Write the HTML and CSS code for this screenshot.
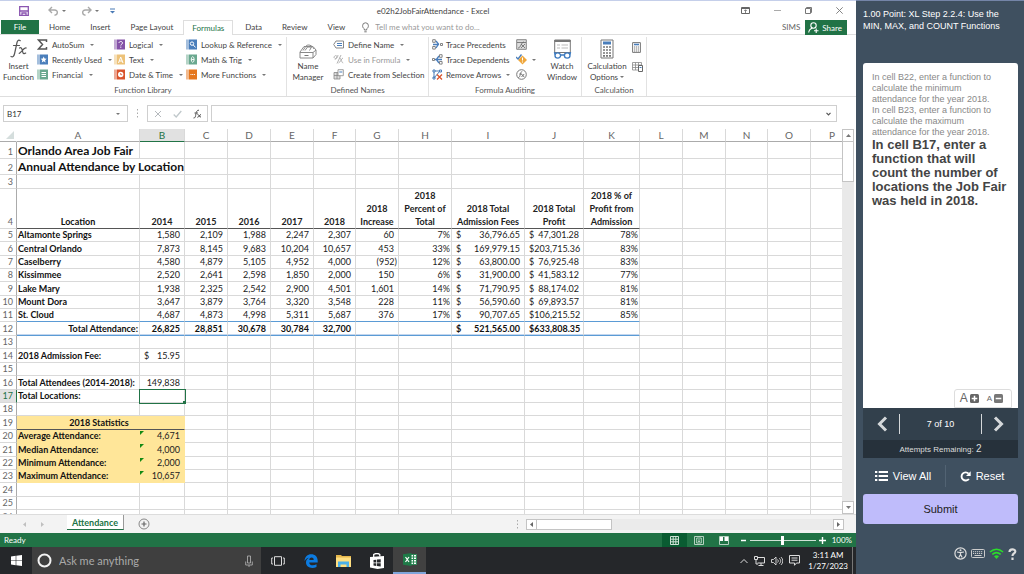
FILE: index.html
```html
<!DOCTYPE html>
<html lang="en">
<head>
<meta charset="utf-8">
<title>e02h2JobFairAttendance - Excel</title>
<link rel="stylesheet" href="styles.css">
</head>
<body>
<div class="screen">
<main class="desktop">
  <header class="titlebar">
    <div class="quick">
      <button aria-label="Save"><svg width="10" height="10" viewBox="0 0 10 10"><path d="M.7.7h8.600v8.600H.7z" fill="#fff" stroke="#8a55b0" stroke-width="1.300"/><path d="M.7 5h8.600M3 9V7h4v2" fill="none" stroke="#8a55b0" stroke-width="1.300"/></svg></button>
      <button class="has-caret" aria-label="Undo"><svg width="11" height="10" viewBox="0 0 11 10"><path d="M4 1L1 4l3 3M1 4h5.500c4 0 3.500 5 0 5.300" fill="none" stroke="#a9a9a9" stroke-width="1.400"/></svg><i class="caret"></i></button>
      <button class="has-caret" aria-label="Redo"><svg width="11" height="10" viewBox="0 0 11 10"><path d="M7 1l3 3-3 3M10 4H4.500C.5 4 1 9 4.500 9.300" fill="none" stroke="#a9a9a9" stroke-width="1.400"/></svg><i class="caret"></i></button>
      <button aria-label="Customize toolbar"><svg width="5" height="6" viewBox="0 0 5 6"><path d="M0 1h5" stroke="#4a7ab5"/><path d="M0 3h5L2.500 5.500z" fill="#4a7ab5"/></svg></button>
    </div>
    <h1>e02h2JobFairAttendance - Excel</h1>
    <div class="window-buttons">
      <button aria-label="Ribbon display"><svg width="9" height="7" viewBox="0 0 9 7"><path d="M.5.5h8v6h-8zM.5 1.500h8" fill="none" stroke="#666"/><path d="M4.500 6V3M3.200 4l1.300-1.300L5.800 4" fill="none" stroke="#666" stroke-width=".8"/></svg></button>
      <button aria-label="Minimize"><svg width="7" height="7" viewBox="0 0 7 7"><path d="M0 3.500h7" stroke="#aaa"/></svg></button>
      <button aria-label="Restore"><svg width="7" height="7" viewBox="0 0 7 7"><path d="M.5 1.500h5v5h-5zM1.500 1V.5h5v5H6" fill="none" stroke="#777"/></svg></button>
      <button aria-label="Close"><svg width="7" height="7" viewBox="0 0 7 7"><path d="M.3.3l6.400 6.400M6.700.3L.3 6.700" stroke="#777" stroke-width=".9"/></svg></button>
    </div>
  </header>

  <nav class="tabs">
    <button class="file">File</button>
    <button>Home</button><button>Insert</button><button>Page Layout</button><button class="active">Formulas</button><button>Data</button><button>Review</button><button>View</button>
    <label class="tell"><svg width="7" height="11" viewBox="0 0 7 11"><path d="M2.300 8V6.800C1 6 .6 5 .6 3.700a2.900 2.900 0 015.800 0C6.400 5 6 6 4.700 6.800V8zM2.300 9.800h2.400" fill="none" stroke="#777"/></svg><input type="text" placeholder="Tell me what you want to do..." aria-label="Tell me what you want to do"></label>
    <span class="account">SIMS</span>
    <button class="share"><svg width="11" height="11" viewBox="0 0 11 11"><circle cx="5.500" cy="3.500" r="2.700" fill="none" stroke="#fff" stroke-width="1.100"/><path d="M.7 10.500C1 8 2.500 6.500 4.500 6.200M6 8.800h4.500M8.200 6.500v4.500" fill="none" stroke="#fff" stroke-width="1.100"/></svg>Share</button>
  </nav>

  <section class="ribbon" aria-label="Formulas ribbon">
    <div class="group library">
      <div class="group-body">
        <button class="big"><svg width="18" height="20" viewBox="0 0 18 20"><g fill="none" stroke="#555" stroke-linecap="round"><path d="M1 17.500c2 1 3-.5 3.600-3L7 3.500C7.500 1 9 .8 10.300 1.700M3.500 6.500h6" stroke-width="1.200"/><path d="M9.500 9c1.500-.8 2.200 0 2.600 1.700l.7 2.600c.4 1.400 1.400 1.800 2.900.8M16.200 9c-2-.8-5.500 5-7 5.300" stroke-width="1.200"/></g></svg><span>Insert<br>Function</span></button>
        <div class="list">
          <button><svg width="11" height="11" viewBox="0 0 11 11"><path d="M9.500 3V1H1.500L5.500 5.500l-4 4.500h8V8" fill="none" stroke="#555" stroke-width="1.500"/></svg>AutoSum<i class="caret"></i></button>
          <button><svg width="11" height="11" viewBox="0 0 11 11"><path d="M.5.500h1v10h-1zM2.500.5H11v10H2.500z" fill="#4a7ebb"/><path d="M6.700 2.500l.9 2 2.100.2-1.600 1.500.5 2.200-1.900-1.200-1.900 1.200.5-2.200-1.600-1.500 2.100-.2z" fill="#fff"/></svg>Recently Used<i class="caret"></i></button>
          <button><svg width="11" height="11" viewBox="0 0 11 11"><path d="M.5.5h1v10h-1zM2.500.5H11v10H2.500z" fill="#6aa88f"/><path d="M4.500 3.500h4.500M4.500 5.500h4.500M4.500 7.500h4.500" stroke="#fff"/></svg>Financial<i class="caret"></i></button>
        </div>
        <div class="list">
          <button><svg width="11" height="11" viewBox="0 0 11 11"><path d="M.5.5h1v10h-1zM2.500.5H11v10H2.500z" fill="#8552a8"/><path d="M5 4c0-2 3.500-2 3.500 0 0 1.200-1.700 1.200-1.700 2.500M6.800 7.600v1.200" fill="none" stroke="#fff"/></svg>Logical<i class="caret"></i></button>
          <button><svg width="11" height="11" viewBox="0 0 11 11"><path d="M.5.5h1v10h-1zM2.500.5H11v10H2.500z" fill="#edc278"/><path d="M4.500 9l2.200-6L9 9M5.300 7h3" fill="none" stroke="#fff"/></svg>Text<i class="caret"></i></button>
          <button><svg width="11" height="11" viewBox="0 0 11 11"><path d="M.5.5h1v10h-1zM2.500.5H11v10H2.500z" fill="#d9532c"/><circle cx="6.700" cy="5.500" r="2.700" fill="#fff"/><path d="M6.700 4v1.700h1.500" fill="none" stroke="#d9532c" stroke-width=".8"/></svg>Date &amp; Time<i class="caret"></i></button>
        </div>
        <div class="list">
          <button><svg width="11" height="11" viewBox="0 0 11 11"><path d="M.5.5h1v10h-1zM2.500.5H11v10H2.500z" fill="#4a7ebb"/><circle cx="6" cy="4.600" r="1.700" fill="none" stroke="#fff"/><path d="M7.300 6l2.300 2.500" stroke="#fff"/></svg>Lookup &amp; Reference<i class="caret"></i></button>
          <button><svg width="11" height="11" viewBox="0 0 11 11"><path d="M.5.5h1v10h-1zM2.500.5H11v10H2.500z" fill="#6aa88f"/><path d="M6.700 2.700c-1.900 0-1.900 5.600 0 5.600s1.900-5.600 0-5.600zM5.300 5.500h2.800" fill="none" stroke="#fff" stroke-width=".9"/></svg>Math &amp; Trig<i class="caret"></i></button>
          <button><svg width="11" height="11" viewBox="0 0 11 11"><path d="M.5.5h1v10h-1zM2.500.5H11v10H2.500z" fill="#e5771e"/><path d="M4.500 5.500h4.500" stroke="#fff" stroke-dasharray="1 .7"/></svg>More Functions<i class="caret"></i></button>
        </div>
      </div>
      <h2>Function Library</h2>
    </div>
    <div class="group names">
      <div class="group-body">
        <button class="big"><svg width="18" height="15" viewBox="0 0 18 15"><path d="M1 8l4-5.500h9l3 3.500v4.500L14 14H1zM1 8.500h13V14M14 8.500L17 6" fill="#fff" stroke="#8a8a8a"/><path d="M4 6.500L7 2c2-2 6-1 8 3M6 6.500l2.500-3.500 4 0-2 3.500" fill="none" stroke="#8a8a8a"/><path d="M5.500 11.500h4" stroke="#777"/></svg><span>Name<br>Manager</span></button>
        <div class="list">
          <button><svg width="11" height="9" viewBox="0 0 11 9"><path d="M3 1h7.500v7H3L.7 4.500z" fill="#fff" stroke="#888"/><path d="M4 3.500h5M4 5.500h5" stroke="#4a7ebb"/></svg>Define Name<i class="caret"></i></button>
          <button disabled><svg width="11" height="11" viewBox="0 0 11 11"><path d="M1 4c0-3 3-3 3-1S1 5 2 5s3-2 3-4M8 1L4 9.500M6.500 4c1.500-.5 2 5 3.700 5M10 4c-1.500 0-3 5-4.500 5" fill="none" stroke="#aaa" stroke-width=".9"/></svg>Use in Formula<i class="caret"></i></button>
          <button><svg width="11" height="11" viewBox="0 0 11 11"><path d="M1 3.500h6v6.500H1zM1 6.500h6M4 3.500V10" fill="#ddd" stroke="#888" stroke-width=".8"/><path d="M5 .7h5.300v6H5z" fill="#fff" stroke="#888" stroke-width=".8"/><path d="M6.300 3h3" stroke="#4a7ebb"/></svg>Create from Selection</button>
        </div>
      </div>
      <h2>Defined Names</h2>
    </div>
    <div class="group auditing">
      <div class="group-body">
        <div class="list">
          <button><svg width="11" height="11" viewBox="0 0 11 11"><path d="M.7.7h2.600v2.600H.7zM.7 7.500h2.600v2.600H.7zM8.500 4.500h2v2h-2z" fill="#fff" stroke="#777" stroke-width=".9"/><path d="M1 5.500h6M4 2l2.500 3L4 9" fill="none" stroke="#4a7ebb" stroke-width="1.300"/></svg>Trace Precedents</button>
          <button><svg width="11" height="11" viewBox="0 0 11 11"><path d="M7.500.7h2.600v2.600H7.500zM7.500 7.500h2.600v2.600H7.500zM.5 4.500h2v2h-2z" fill="#fff" stroke="#777" stroke-width=".9"/><path d="M3 5.500h7M7 2L4.300 5.500 7 9" fill="none" stroke="#4a7ebb" stroke-width="1.300"/></svg>Trace Dependents</button>
          <button><svg width="11" height="11" viewBox="0 0 11 11"><path d="M1 1h2v2H1zM7.500 1h2v2h-2zM1 8h2v2H1zM3 2h5L2 9V3" fill="none" stroke="#4a7ebb"/><path d="M5 5.500l5 5M10 5.500l-5 5" stroke="#d9532c" stroke-width="1.300"/></svg>Remove Arrows<i class="caret"></i></button>
        </div>
        <div class="list icons">
          <button aria-label="Show Formulas"><svg width="11" height="11" viewBox="0 0 11 11"><path d="M.7.7h9.600v9.600H.7z" fill="#ddd" stroke="#888"/><path d="M1 3.500h9M2 9c3 0 3-6 6-6M5 5l4 4M9 5L5 9" fill="none" stroke="#666" stroke-width=".8"/></svg></button>
          <button class="has-caret" aria-label="Error Checking"><svg width="11" height="11" viewBox="0 0 11 11"><path d="M6.500 1.500L11 6l-4.500 4.500L2 6z" fill="#efa73c"/><path d="M6.500 3.500v3M6.500 7.500v1" stroke="#fff"/><path d="M0 3l2 2 3.500-4.500" fill="none" stroke="#4a7ebb" stroke-width="1.300"/></svg><i class="caret"></i></button>
          <button aria-label="Evaluate Formula"><svg width="11" height="11" viewBox="0 0 11 11"><circle cx="5.500" cy="5.500" r="4.800" fill="#fff" stroke="#777"/><path d="M2.500 8.500c2 0 1.500-6 3.700-6M3.300 5h2.500M5.500 5l2.700 3M8.200 5L5.500 8" fill="none" stroke="#666" stroke-width=".9"/></svg></button>
        </div>
        <button class="big watch"><svg width="19" height="20" viewBox="0 0 19 20"><path d="M1.700 1h15.600v12.500H1.700z" fill="#fff" stroke="#777"/><path d="M1.500 2h16" stroke="#777" stroke-width="2"/><path d="M4 6h3M8.500 6H15M4 9h3M8.500 9H15" stroke="#bbb"/><path d="M2 16.500a2.800 2.600 0 005.600 0 2.800 2.600 0 00-5.600 0M11.400 16.500a2.800 2.600 0 005.600 0 2.800 2.600 0 00-5.600 0M7.600 16h3.800M2 16l-.5-3M17 16l.5-3" fill="#fff" stroke="#3f7cc0" stroke-width="1.400"/></svg><span>Watch<br>Window</span></button>
      </div>
      <h2>Formula Auditing</h2>
    </div>
    <div class="group calc">
      <div class="group-body">
        <button class="big"><svg width="14" height="20" viewBox="0 0 14 20"><path d="M1 1h12v18H1z" fill="#fff" stroke="#777"/><path d="M3 4h8" stroke="#4a7ebb" stroke-width="3"/><path d="M3 8h8M3 11h8M3 14h8M3 16.800h8" stroke="#777" stroke-width="1.700" stroke-dasharray="2 1"/></svg><span>Calculation<br>Options<i class="caret"></i></span></button>
        <div class="list icons two">
          <button aria-label="Calculate Now"><svg width="9" height="11" viewBox="0 0 9 11"><path d="M.6.6h7.800v9.800H.6z" fill="#fff" stroke="#777"/><path d="M2 2.500h5" stroke="#4a7ebb" stroke-width="1.600"/><path d="M2 5h5M2 7h5M2 9h5" stroke="#777" stroke-dasharray="1.200 .7"/></svg></button>
          <button aria-label="Calculate Sheet"><svg width="11" height="10" viewBox="0 0 11 10"><path d="M.5.5h9v7.500h-9zM.5 3h9M.5 5.500h9M3.500.5V8M6.500.5V8" fill="#fff" stroke="#888" stroke-width=".8"/><path d="M6.500 3.500h4v6h-4z" fill="#fff" stroke="#666"/><path d="M7.500 5.500h2" stroke="#4a7ebb"/></svg></button>
        </div>
      </div>
      <h2>Calculation</h2>
    </div>
  </section>

  <div class="formula-bar">
    <label class="name-box"><input type="text" value="B17" aria-label="Name box"><i class="caret"></i></label>
    <svg class="grip" width="3" height="9" viewBox="0 0 3 9"><path d="M1.500 0v9" stroke="#aaa" stroke-dasharray="1.500 2"/></svg>
    <div class="entry-buttons">
      <button aria-label="Cancel"><svg width="8" height="8" viewBox="0 0 8 8"><path d="M1 1l6 6M7 1L1 7" stroke="#b5b9bd"/></svg></button>
      <button aria-label="Enter"><svg width="9" height="8" viewBox="0 0 9 8"><path d="M.7 4.500L3.200 7 8.300 1" fill="none" stroke="#c0c8cb" stroke-width="1.300"/></svg></button>
      <button aria-label="Insert function"><svg width="9" height="10" viewBox="0 0 9 10"><path d="M.5 9c2 .3 2-2 2.400-4S4 .8 6 1.200M1.500 4h3.500M4.500 5.500C6 5 6 8.500 8 8M8 5.500C6.500 5.500 6 8.500 4.300 8.300" fill="none" stroke="#555"/></svg></button>
    </div>
    <label class="formula"><input type="text" aria-label="Formula"><svg width="5" height="4" viewBox="0 0 5 4"><path d="M.5.800l2 2 2-2" fill="none" stroke="#555" stroke-width="1.200"/></svg></label>
  </div>

  <section class="sheet">
    <div class="grid-view">
      <table>
        <colgroup><col class="c-head"><col class="c-name"><col class="c-b"><col class="c-std"><col class="c-std"><col class="c-std"><col class="c-f"><col class="c-std"><col class="c-h"><col class="c-i"><col class="c-j"><col class="c-k"><col class="c-std"><col class="c-std"><col class="c-f"><col class="c-std"><col class="c-std"></colgroup>
        <thead><tr><th class="corner"><svg width="8" height="8" viewBox="0 0 8 8"><path d="M8 0v8H0z" fill="#d5dedd"/></svg></th><th>A</th><th class="picked">B</th><th>C</th><th>D</th><th>E</th><th>F</th><th>G</th><th>H</th><th>I</th><th>J</th><th>K</th><th>L</th><th>M</th><th>N</th><th>O</th><th>P</th></tr></thead>
        <tbody>
          <tr class="heading first"><th>1</th><td>Orlando Area Job Fair</td><td></td><td></td><td></td><td></td><td></td><td></td><td></td><td></td><td></td><td></td><td></td><td></td><td></td><td></td><td></td></tr>
          <tr class="heading"><th>2</th><td colspan="2">Annual Attendance by Location</td><td></td><td></td><td></td><td></td><td></td><td></td><td></td><td></td><td></td><td></td><td></td><td></td><td></td><td></td></tr>
          <tr class="tall"><th>3</th><td></td><td></td><td></td><td></td><td></td><td></td><td></td><td></td><td></td><td></td><td></td><td></td><td></td><td></td><td></td><td></td></tr>
          <tr class="labels"><th>4</th><td>Location</td><td>2014</td><td>2015</td><td>2016</td><td>2017</td><td>2018</td><td>2018<br>Increase</td><td>2018<br>Percent of<br>Total</td><td>2018 Total<br>Admission Fees</td><td>2018 Total<br>Profit</td><td>2018 % of<br>Profit from<br>Admission</td><td></td><td></td><td></td><td></td><td></td></tr>
          <tr><th>5</th><td>Altamonte Springs</td><td>1,580</td><td>2,109</td><td>1,988</td><td>2,247</td><td>2,307</td><td>60</td><td class="pct">7%</td><td class="money"><div><span>$</span>36,796.65</div></td><td class="money"><div><span>$</span>47,301.28</div></td><td class="pct">78%</td><td></td><td></td><td></td><td></td><td></td></tr>
          <tr class="tall"><th>6</th><td>Central Orlando</td><td>7,873</td><td>8,145</td><td>9,683</td><td>10,204</td><td>10,657</td><td>453</td><td class="pct">33%</td><td class="money"><div><span>$</span>169,979.15</div></td><td class="money"><div><span>$</span>203,715.36</div></td><td class="pct">83%</td><td></td><td></td><td></td><td></td><td></td></tr>
          <tr><th>7</th><td>Caselberry</td><td>4,580</td><td>4,879</td><td>5,105</td><td>4,952</td><td>4,000</td><td class="pct">(952)</td><td class="pct">12%</td><td class="money"><div><span>$</span>63,800.00</div></td><td class="money"><div><span>$</span>76,925.48</div></td><td class="pct">83%</td><td></td><td></td><td></td><td></td><td></td></tr>
          <tr><th>8</th><td>Kissimmee</td><td>2,520</td><td>2,641</td><td>2,598</td><td>1,850</td><td>2,000</td><td>150</td><td class="pct">6%</td><td class="money"><div><span>$</span>31,900.00</div></td><td class="money"><div><span>$</span>41,583.12</div></td><td class="pct">77%</td><td></td><td></td><td></td><td></td><td></td></tr>
          <tr class="tall"><th>9</th><td>Lake Mary</td><td>1,938</td><td>2,325</td><td>2,542</td><td>2,900</td><td>4,501</td><td>1,601</td><td class="pct">14%</td><td class="money"><div><span>$</span>71,790.95</div></td><td class="money"><div><span>$</span>88,174.02</div></td><td class="pct">81%</td><td></td><td></td><td></td><td></td><td></td></tr>
          <tr><th>10</th><td>Mount Dora</td><td>3,647</td><td>3,879</td><td>3,764</td><td>3,320</td><td>3,548</td><td>228</td><td class="pct">11%</td><td class="money"><div><span>$</span>56,590.60</div></td><td class="money"><div><span>$</span>69,893.57</div></td><td class="pct">81%</td><td></td><td></td><td></td><td></td><td></td></tr>
          <tr class="last-item"><th>11</th><td>St. Cloud</td><td>4,687</td><td>4,873</td><td>4,998</td><td>5,311</td><td>5,687</td><td>376</td><td class="pct">17%</td><td class="money"><div><span>$</span>90,707.65</div></td><td class="money"><div><span>$</span>106,215.52</div></td><td class="pct">85%</td><td></td><td></td><td></td><td></td><td></td></tr>
          <tr class="tall total"><th>12</th><td>Total Attendance:</td><td>26,825</td><td>28,851</td><td>30,678</td><td>30,784</td><td>32,700</td><td></td><td></td><td class="money"><div><span>$</span>521,565.00</div></td><td class="money"><div><span>$</span>633,808.35</div></td><td></td><td></td><td></td><td></td><td></td><td></td></tr>
          <tr><th>13</th><td></td><td></td><td></td><td></td><td></td><td></td><td></td><td></td><td></td><td></td><td></td><td></td><td></td><td></td><td></td><td></td></tr>
          <tr class="tall"><th>14</th><td>2018 Admission Fee:</td><td class="money"><div><span>$</span>15.95</div></td><td></td><td></td><td></td><td></td><td></td><td></td><td></td><td></td><td></td><td></td><td></td><td></td><td></td><td></td></tr>
          <tr><th>15</th><td></td><td></td><td></td><td></td><td></td><td></td><td></td><td></td><td></td><td></td><td></td><td></td><td></td><td></td><td></td><td></td></tr>
          <tr class="tall"><th>16</th><td>Total Attendees (2014-2018):</td><td>149,838</td><td></td><td></td><td></td><td></td><td></td><td></td><td></td><td></td><td></td><td></td><td></td><td></td><td></td><td></td></tr>
          <tr><th class="picked">17</th><td>Total Locations:</td><td class="selected"></td><td></td><td></td><td></td><td></td><td></td><td></td><td></td><td></td><td></td><td></td><td></td><td></td><td></td><td></td></tr>
          <tr><th>18</th><td></td><td></td><td></td><td></td><td></td><td></td><td></td><td></td><td></td><td></td><td></td><td></td><td></td><td></td><td></td><td></td></tr>
          <tr class="tall"><th>19</th><td class="stat-title" colspan="2">2018 Statistics</td><td></td><td></td><td></td><td></td><td></td><td></td><td></td><td></td><td></td><td></td><td></td><td></td><td></td></tr>
          <tr><th>20</th><td class="stat">Average Attendance:</td><td class="stat flag">4,671</td><td></td><td></td><td></td><td></td><td></td><td></td><td></td><td></td><td></td><td></td><td></td><td></td><td></td><td></td></tr>
          <tr class="tall"><th>21</th><td class="stat">Median Attendance:</td><td class="stat flag">4,000</td><td></td><td></td><td></td><td></td><td></td><td></td><td></td><td></td><td></td><td></td><td></td><td></td><td></td><td></td></tr>
          <tr><th>22</th><td class="stat">Minimum Attendance:</td><td class="stat flag">2,000</td><td></td><td></td><td></td><td></td><td></td><td></td><td></td><td></td><td></td><td></td><td></td><td></td><td></td><td></td></tr>
          <tr><th>23</th><td class="stat">Maximum Attendance:</td><td class="stat flag">10,657</td><td></td><td></td><td></td><td></td><td></td><td></td><td></td><td></td><td></td><td></td><td></td><td></td><td></td><td></td></tr>
          <tr class="tall"><th>24</th><td></td><td></td><td></td><td></td><td></td><td></td><td></td><td></td><td></td><td></td><td></td><td></td><td></td><td></td><td></td><td></td></tr>
          <tr><th>25</th><td></td><td></td><td></td><td></td><td></td><td></td><td></td><td></td><td></td><td></td><td></td><td></td><td></td><td></td><td></td><td></td></tr>
          <tr class="tall"><th>26</th><td></td><td></td><td></td><td></td><td></td><td></td><td></td><td></td><td></td><td></td><td></td><td></td><td></td><td></td><td></td><td></td></tr>
        </tbody>
      </table>
    </div>
    <div class="v-scroll">
      <button aria-label="Scroll up"><svg width="5" height="3" viewBox="0 0 5 3"><path d="M0 3h5L2.500 0z" fill="#777"/></svg></button>
      <div class="v-thumb"></div>
      <button aria-label="Scroll down"><svg width="5" height="3" viewBox="0 0 5 3"><path d="M0 0h5L2.500 3z" fill="#777"/></svg></button>
    </div>
  </section>

  <div class="sheet-tabs">
    <div class="arrows"><button aria-label="Previous sheet"><svg width="3" height="5" viewBox="0 0 3 5"><path d="M3 0v5L0 2.500z" fill="#c0c0c0"/></svg></button><button aria-label="Next sheet"><svg width="3" height="5" viewBox="0 0 3 5"><path d="M0 0v5l3-2.500z" fill="#c0c0c0"/></svg></button></div>
    <button class="sheet-tab">Attendance</button>
    <button aria-label="New sheet"><svg width="12" height="12" viewBox="0 0 12 12"><circle cx="6" cy="6" r="5" fill="none" stroke="#888"/><path d="M3.500 6h5M6 3.500v5" stroke="#666" stroke-width="1.200"/></svg></button>
    <svg class="splitter" width="3" height="9" viewBox="0 0 3 9"><path d="M1.500 0v9" stroke="#aaa" stroke-dasharray="1.500 2"/></svg>
    <div class="h-scroll">
      <button aria-label="Scroll left"><svg width="3" height="5" viewBox="0 0 3 5"><path d="M3 0v5L0 2.500z" fill="#666"/></svg></button>
      <div class="h-thumb"></div>
      <button aria-label="Scroll right"><svg width="3" height="5" viewBox="0 0 3 5"><path d="M0 0v5l3-2.500z" fill="#666"/></svg></button>
    </div>
  </div>

  <div class="status">
    <span class="ready">Ready</span>
    <button class="current" aria-label="Normal view"><svg width="9" height="9" viewBox="0 0 9 9"><path d="M.5.5h8v8h-8zM.5 3.200h8M.5 5.800h8M3.200.5v8M5.800.5v8" fill="none" stroke="#cfe2d6"/></svg></button>
    <button aria-label="Page layout"><svg width="10" height="9" viewBox="0 0 10 9"><path d="M.5.500h9v8h-9zM2.700 2h4.600v5H2.700zM4 4h2M4 5.500h2" fill="none" stroke="#b5d0c0"/></svg></button>
    <button aria-label="Page break preview"><svg width="10" height="9" viewBox="0 0 10 9"><path d="M.5.5h9v8h-9z" fill="none" stroke="#b5d0c0"/><path d="M1 1h3v4H1zM5.500 1H9v4H5.500z" fill="#fff"/></svg></button>
    <button class="zoom-step" aria-label="Zoom out"><svg width="5" height="7" viewBox="0 0 5 7"><path d="M0 3.500h5" stroke="#fff" stroke-width="1.500"/></svg></button>
    <input class="zoom" type="range" min="0" max="100" value="50" aria-label="Zoom">
    <button class="zoom-step" aria-label="Zoom in"><svg width="7" height="7" viewBox="0 0 7 7"><path d="M0 3.500h7M3.500 0v7" stroke="#fff" stroke-width="1.400"/></svg></button>
    <span>100%</span>
  </div>

  <footer class="taskbar">
    <button class="start" aria-label="Start"><svg width="11" height="11" viewBox="0 0 11 11"><path d="M0 1.500l4.700-.7v4.400H0zM5.300.7L11 0v5.200H5.300zM0 5.800h4.700v4.400L0 9.500zM5.300 5.800H11V11l-5.700-.7z" fill="#fff"/></svg></button>
    <label class="search"><svg width="15" height="15" viewBox="0 0 15 15"><circle cx="7.500" cy="7.500" r="6" fill="none" stroke="#f2f2f2" stroke-width="2"/></svg><input type="text" placeholder="Ask me anything" aria-label="Ask me anything"><svg width="8" height="12" viewBox="0 0 8 12"><path d="M2.500 1h3v7h-3zM.7 6.500V10h6.600V6.500M4 10v2" fill="none" stroke="#aaa" stroke-width=".9"/></svg></label>
    <button aria-label="Task view"><svg width="14" height="10" viewBox="0 0 14 10"><path d="M3.500.7h7v8.600h-7zM2 2H.7v6H2M12 2h1.300v6H12" fill="none" stroke="#ddd"/></svg></button>
    <button aria-label="Edge"><svg width="14" height="14" viewBox="0 0 14 14"><path d="M.5 7C.8 3 3.500.3 7.200.3c4 0 6.500 2.700 6.500 6.700v1.500H5.200c.2 3.200 4.300 3.500 7.300 1.800v2.700C7.500 15.300 2 13.200 2 8.500c0-2.200 1-3.700 2.800-4.800C3.300 3.900 1.600 5 .5 7zm4.800-1h4.400c0-3.200-4.200-3.200-4.400 0z" fill="#0c7be0"/></svg></button>
    <button aria-label="File Explorer"><svg width="15" height="14" viewBox="0 0 15 14"><path d="M0 1h5l1 1h9v11H0z" fill="#e6b84c"/><path d="M0 3.500h15V13H0z" fill="#ffdf80"/><path d="M2 7.500h11V13h-2.500v-2.500h-6V13H2z" fill="#4bb0e8"/></svg></button>
    <button aria-label="Store"><svg width="14" height="16" viewBox="0 0 14 16"><path d="M0 4l14-1v12L7.500 16 0 14.500z" fill="#fff"/><path d="M3.700 4V1.500C5 .3 8.500 0 9.800 1.500V3.500" fill="none" stroke="#fff" stroke-width="1.300"/><path d="M3.500 7l2.800-.3v2.800H3.500zM7 6.600l3.700-.4v3.300H7zM3.500 10.200h2.800V13l-2.800-.4zM7 10.200h3.700v3.400L7 13.100z" fill="#25272a"/></svg></button>
    <button class="open" aria-label="Excel"><svg width="14" height="13" viewBox="0 0 14 13"><path d="M7 1.500h6.500v10H7z" fill="#fff" stroke="#2f8a58"/><path d="M8 4h5M8 6.500h5M8 9h5M10.500 2v9" stroke="#2f8a58"/><path d="M0 1.300L8.500 0v13L0 11.700z" fill="#1f7a48"/><path d="M2.500 4l3.500 5M6 4L2.500 9" stroke="#fff" stroke-width="1.200"/></svg></button>
    <div class="tray">
      <svg width="8" height="6" viewBox="0 0 8 6"><path d="M.5 5L4 1.500 7.500 5" fill="none" stroke="#ddd"/></svg>
      <svg width="11" height="10" viewBox="0 0 11 10"><path d="M3.500 1.500h7v5.500h-7M7 7v2.500M4.500 9.500h5M.5.500h3v3h-3zM2 3.500V8h2" fill="none" stroke="#ddd"/></svg>
      <svg width="12" height="10" viewBox="0 0 12 10"><path d="M.5 3.500h2l2.500-2.500v8L2.500 6.500h-2zM6.500 3.500c1 .9 1 2.100 0 3M8.200 2.200c2 1.700 2 3.900 0 5.600M9.900 1c2.500 2.500 2.500 5.500 0 8" fill="none" stroke="#ddd" stroke-width=".9"/></svg>
      <svg width="11" height="11" viewBox="0 0 11 11"><path d="M.5.500h10v7.500h-3L5.500 10.300V8h-5zM2.500 3h6M2.500 5.200h6" fill="none" stroke="#ddd"/></svg>
      <div class="clock">3:11 AM<br>1/27/2023</div>
    </div>
  </footer>
</main>

<aside class="panel">
  <h2>1.00 Point: XL Step 2.2.4: Use the<br>MIN, MAX, and COUNT Functions</h2>
  <div class="card">
    <div class="steps">
      <p>In cell B22, enter a function to calculate the minimum attendance for the year 2018.</p>
      <p>In cell B23, enter a function to calculate the maximum attendance for the year 2018.</p>
      <p class="now">In cell B17, enter a function that will count the number of locations the Job Fair was held in 2018.</p>
    </div>
    <div class="text-size">
      <button class="larger" aria-label="Larger text">A<svg width="9" height="9" viewBox="0 0 9 9"><rect width="9" height="9" rx="1.500" fill="#666"/><path d="M1.700 4.500h5.600M4.500 1.700v5.600" stroke="#fff" stroke-width="1.500"/></svg></button>
      <button class="smaller" aria-label="Smaller text">A<svg width="9" height="9" viewBox="0 0 9 9"><rect width="9" height="9" rx="1.500" fill="#777"/><path d="M1.700 4.500h5.600" stroke="#fff" stroke-width="1.500"/></svg></button>
    </div>
  </div>
  <div class="pager">
    <button aria-label="Previous"><svg width="11" height="16" viewBox="0 0 11 16"><path d="M9 1.500L2.500 8 9 14.500" fill="none" stroke="#d5d8da" stroke-width="3"/></svg></button>
    <span>7 of 10</span>
    <button aria-label="Next"><svg width="11" height="16" viewBox="0 0 11 16"><path d="M2 1.500L8.500 8 2 14.500" fill="none" stroke="#d5d8da" stroke-width="3"/></svg></button>
  </div>
  <div class="attempts">Attempts Remaining: <b>2</b></div>
  <div class="actions">
    <button><svg width="13" height="10" viewBox="0 0 13 10"><path d="M0 1h2.300M0 5h2.300M0 9h2.300M3.700 1H13M3.700 5H13M3.700 9H13" stroke="#fff" stroke-width="1.900"/></svg>View All</button>
    <button><svg width="11" height="11" viewBox="0 0 11 11"><path d="M8.900 8A4.100 4.100 0 118.600 2.600" fill="none" stroke="#fff" stroke-width="1.900"/><path d="M10.700.3v4.700H6z" fill="#fff"/></svg>Reset</button>
  </div>
  <button class="submit">Submit</button>
  <div class="tools">
    <button aria-label="Accessibility"><svg width="13" height="13" viewBox="0 0 13 13"><circle cx="6.500" cy="6.500" r="5.600" fill="none" stroke="#ddd" stroke-width="1.200"/><circle cx="6.500" cy="3.300" r="1" fill="#ddd"/><path d="M3 5l3.500.6L10 5M6.500 5.500v2L4.800 10.500M6.500 7.500l1.700 3" fill="none" stroke="#ddd" stroke-width="1.200"/></svg></button>
    <button aria-label="Keyboard"><svg width="14" height="9" viewBox="0 0 14 9"><rect x=".5" y=".5" width="13" height="8" rx="1" fill="none" stroke="#ccc"/><path d="M2 2.700h10M2 4.500h10" stroke="#ccc" stroke-dasharray="1.200 .8"/><path d="M3.500 6.500h7" stroke="#ccc"/></svg></button>
    <button aria-label="Connection"><svg width="15" height="11" viewBox="0 0 15 11"><path d="M1 4c4-3.700 9-3.700 13 0M3.300 6.300c2.700-2.300 5.700-2.300 8.400 0" fill="none" stroke="#2bdc2b" stroke-width="1.700"/><path d="M5 8.300c1.700-1.300 3.300-1.300 5 0L7.500 11z" fill="#2bdc2b"/></svg></button>
    <button aria-label="Help"><svg width="9" height="12" viewBox="0 0 9 12"><path d="M1.500 4C1.500.5 7.300.7 7.300 3.500c0 2-2.800 2-2.800 4.500M4.500 9.500V12" fill="none" stroke="#ddd" stroke-width="2.200"/></svg></button>
  </div>
</aside>
</div>
</body>
</html>
```
FILE: styles.css
```css
* { box-sizing: border-box; }
body { margin: 0; font-family: Lato, "Liberation Sans", sans-serif; font-size: 8px; color: #444; background: #fff; }
button, input { font: inherit; color: inherit; background: none; border: 0; padding: 0; margin: 0; }
button { display: flex; align-items: center; justify-content: center; white-space: nowrap; }
input { min-width: 0; outline: 0; }
svg { display: block; flex: none; }
h1, h2, p { margin: 0; font-size: inherit; font-weight: 400; }

.screen { display: grid; grid-template-columns: minmax(0, 1fr) 168px; height: 100vh; }
.desktop { display: flex; flex-direction: column; min-width: 0; min-height: 0; overflow: hidden; background: #fff; }
.caret { width: 4px; border: 2px solid transparent; border-top-color: #777; border-bottom: 0; }

/* title bar */
.titlebar { display: grid; grid-template-columns: 1fr auto 1fr; align-items: center; height: 20px; border-top: 1px solid #c5cfea; }
.titlebar h1 { padding-left: 10px; font-size: 8px; }
.quick { display: flex; align-items: center; gap: 15px; padding-left: 19px; }
.quick button:nth-child(2) { margin-left: 4px; }
.quick button:last-child { margin-left: -4px; }
.has-caret { gap: 3px; }
.window-buttons { display: flex; justify-content: flex-end; gap: 24px; padding-right: 13px; }

/* ribbon tabs */
.tabs { display: flex; height: 15px; padding-left: 1px; border-bottom: 1px solid #dedede; }
.tabs > button { padding: 0 10px; }
.tabs .file { width: 38px; color: #fff; background: #217346; }
.tabs .active { padding: 0 8px; margin-bottom: -1px; color: #217346; background: #fff; border: 1px solid #dedede; border-bottom: 0; }
.tabs .active + button { padding-left: 12px; }
.tell { display: flex; flex: 1; align-items: center; gap: 6px; padding-left: 7px; }
.tell input { flex: 1; }
.tell input::placeholder { color: #999; opacity: 1; }
.account { align-self: center; margin-right: 5px; color: #666; }
.tabs .share { gap: 3px; padding: 0 5px 0 3px; margin: 0 9px -1px 0; color: #fff; background: #217346; }

/* ribbon */
.ribbon { display: flex; padding-top: 2px; border-bottom: 1px solid #dedede; }
.group { display: flex; flex-direction: column; border-right: 1px solid #e2e2e2; }
.group-body { display: flex; height: 46px; }
.group h2 { height: 13px; line-height: 14px; text-align: center; color: #555; }
.library { width: 287px; }
.names { width: 142px; }
.auditing { width: 153px; }
.calc { width: 65px; }
.big { flex-direction: column; justify-content: flex-end; width: 37px; gap: 2px; line-height: 11px; }
.big .caret { display: inline-block; margin: 0 0 2px 2px; }
.list { display: grid; grid-template-rows: repeat(3, 15px); }
.list button { justify-content: flex-start; gap: 4px; }
.list button .caret { margin-left: 2px; }
.list button:disabled { color: #999; }
.library .list { width: 77px; }
.library .list:nth-child(3) { width: 72px; }
.library .list:last-child { width: 100px; }
.names .big { width: 42px; }
.names .list { padding-left: 4px; }
.auditing .list { width: 87px; padding-left: 3px; }
.auditing .list button { gap: 3px; }
.auditing .icons { width: 27px; padding: 0; }
.watch { width: 38px; }
.calc .big { width: 50px; }
.calc .two { grid-template-rows: 20px 20px; }

/* formula bar */
.formula-bar { display: flex; align-items: center; padding: 8px 19px 7px 3px; }
.name-box, .entry-buttons, .formula { display: flex; align-items: center; height: 17px; border: 1px solid #cfcfcf; }
.name-box { width: 125px; padding: 0 7px 0 3px; }
.name-box input { flex: 1; color: #333; }
.grip { margin: 0 8px; }
.entry-buttons { justify-content: space-between; width: 61px; padding: 0 5px 0 6px; }
.formula { flex: 1; margin-left: 3px; padding-right: 5px; }
.formula input { flex: 1; }

/* worksheet */
.sheet { display: flex; flex: 1; min-height: 0; padding-right: 2px; }
.grid-view { flex: 1; min-width: 0; overflow: hidden; }
table { width: 854px; table-layout: fixed; border-collapse: separate; border-spacing: 0; font-size: 9px; line-height: 12px; color: #222; }
.c-head { width: 17px; }
.c-name { width: 123px; }
.c-b { width: 45px; }
.c-std { width: 43px; }
.c-f { width: 42px; }
.c-h { width: 53px; }
.c-i { width: 73px; }
.c-j { width: 59px; }
.c-k { width: 56px; }
td, th { height: 13px; padding: 0 4px 0 1px; border: 0 solid #d9d9d9; border-width: 0 1px 1px 0; text-align: right; vertical-align: bottom; white-space: nowrap; }
.tall > * { height: 14px; }
th { padding: 0; font-weight: 400; color: #666; }
thead th { font-size: 10px; text-align: center; border-bottom-color: #ababab; }
thead .corner { border-right-color: #fff; }
.corner svg { margin: 0 0 2px 6px; }
tbody th { padding-right: 3px; border-right-color: #ababab; }
th.picked { color: #217346; background: #e1e1e1; }
thead .picked { border-bottom-color: #217346; }
tbody .picked { border-right-color: #217346; }
td:nth-child(2) { font-weight: 700; text-align: left; color: #111; }
.heading > td { font-size: 12px; line-height: 15px; height: 16px; }
.first > * { height: 17px; }
.labels > * { height: 40px; padding: 0; font-weight: 700; line-height: 13px; }
.labels > th { padding-right: 3px; font-weight: 400; }
.labels > td, .labels > td:nth-child(2) { text-align: center; }
.labels > td:nth-child(-n+12) { border-bottom-color: #555; }
td.pct { padding-right: 1px; }
.money div { display: flex; justify-content: space-between; padding-left: 3px; }
.last-item > td:nth-child(-n+12) { border-bottom-color: #5b9bd5; }
.total > td { font-weight: 700; color: #111; }
.total > td:nth-child(2) { padding-right: 1px; text-align: right; }
.total > td:nth-child(-n+12) { border-bottom: 1px solid #5b9bd5; box-shadow: inset 0 -1px #c3d6ee; }
td.selected { position: relative; outline: 1px solid #217346; }
.selected::after { content: ""; position: absolute; right: -2px; bottom: -2px; width: 3px; height: 3px; background: #217346; }
td.stat, td.stat-title { background: #ffe699; border-color: #ffe699; }
td.stat-title { text-align: center; border-bottom-color: #555; }
td.flag { position: relative; }
.flag::before { content: ""; position: absolute; left: 0; top: 1px; border: 2px solid #138a13; border-right-color: transparent; border-bottom-color: transparent; }

.v-scroll { display: flex; flex-direction: column; width: 12px; background: #e9e9e9; }
.v-scroll button { height: 13px; background: #fff; border: 1px solid #c4c4c4; }
.v-thumb { height: 40px; margin-bottom: auto; background: #fff; border: 1px solid #c4c4c4; border-top: 0; }

/* sheet tabs */
.sheet-tabs { display: flex; align-items: center; height: 19px; padding-right: 12px; background: #f3f3f3; border-top: 1px solid #dcdcdc; }
.arrows { display: flex; gap: 15px; width: 67px; padding-left: 23px; }
.sheet-tab { align-self: flex-start; height: 15px; padding: 0 5px; margin-right: 14px; font-size: 9px; font-weight: 700; color: #217346; background: #fff; border-right: 1px solid #999; border-bottom: 1px solid #217346; }
.splitter { margin: 0 7px 0 auto; }
.h-scroll { display: flex; flex: 0 1 318px; height: 11px; background: #ebebeb; }
.h-scroll button { width: 11px; background: #fff; border: 1px solid #c4c4c4; }
.h-thumb { width: 75px; margin-right: auto; background: #fff; border: 1px solid #c4c4c4; border-left: 0; }

/* status bar */
.status { display: flex; align-items: center; height: 14px; padding: 0 4px; color: #fff; background: #217346; }
.ready { margin-right: auto; }
.status button { align-self: stretch; width: 25px; }
.status .current { background: #0a5c32; }
.status .zoom-step { width: 13px; }
.status span:last-child { margin-left: 3px; }
.zoom { appearance: none; width: 66px; height: 9px; background: linear-gradient(#cfe2d6, #cfe2d6) center / 100% 1px no-repeat; }
.zoom::-webkit-slider-thumb { appearance: none; width: 3px; height: 9px; background: #fff; }

/* taskbar */
.taskbar { display: flex; height: 27px; color: #fff; background: #25272a; }
.taskbar button { width: 33px; }
.taskbar .start { width: 32px; }
.search { display: flex; align-items: center; gap: 7px; flex: 0 1 229px; padding: 0 8px 0 5px; background: #3f3f3f; }
.search input { flex: 1; font-size: 11px; }
.search input::placeholder { color: #aaa; opacity: 1; }
.taskbar .open { background: #414141; border-bottom: 2px solid #7fa5da; }
.tray { display: flex; align-items: center; gap: 6px; margin: 0 3px 0 auto; padding-right: 4px; border-right: 1px solid #777; }
.clock { margin-left: 2px; font-size: 8px; line-height: 11px; text-align: center; }

/* task panel */
.panel { display: flex; flex-direction: column; padding: 7px 6px 14px 7px; font-family: "Liberation Sans", Arial, sans-serif; color: #fff; background: #3f5060; border-top: 1px solid #7485a8; }
.panel h2 { height: 55px; font-size: 9px; line-height: 12px; white-space: nowrap; }
.card { display: flex; flex: 1; flex-direction: column; justify-content: space-between; min-height: 0; color: #444; background: #fff; border-radius: 3px 3px 0 0; }
.steps { padding: 9px 5px 0 9px; font-size: 9px; line-height: 11px; color: #888; }
.steps p:not(.now) { padding-right: 14px; }
.steps .now { font-size: 13px; font-weight: 700; line-height: 14px; color: #444; }
.text-size { display: flex; align-self: flex-end; gap: 8px; margin-right: 6px; padding: 2px 8px 2px 5px; border: 1px solid #ddd; border-radius: 3px 3px 0 0; }
.text-size button { gap: 2px; color: #666; }
.text-size .larger { font-size: 12px; line-height: 13px; }
.text-size .smaller { font-size: 8px; }
.pager { display: flex; align-items: center; height: 32px; background: #32404c; font-size: 9px; }
.pager button { width: 36px; height: 20px; padding-left: 3px; }
.pager button:last-child { padding: 0 4px 0 0; }
.pager span { flex: 1; line-height: 20px; text-align: center; border: solid #d5d8da; border-width: 0 1px; }
.attempts { height: 18px; line-height: 18px; text-align: center; color: #ddd; background: #26313b; }
.attempts b { font-size: 10px; font-weight: 400; }
.actions { display: grid; grid-template-columns: 83px 1fr; height: 22px; margin: 7px 0; font-size: 11px; }
.actions button { gap: 5px; color: #fff; }
.actions button:first-child { padding-right: 2px; border-right: 1px solid #526373; }
.submit { height: 30px; font-size: 11px; color: #222; background: #bfbcfb; border-radius: 3px; }
.tools { display: flex; align-items: center; justify-content: flex-end; gap: 4px; padding: 23px 1px 0 0; }
```
